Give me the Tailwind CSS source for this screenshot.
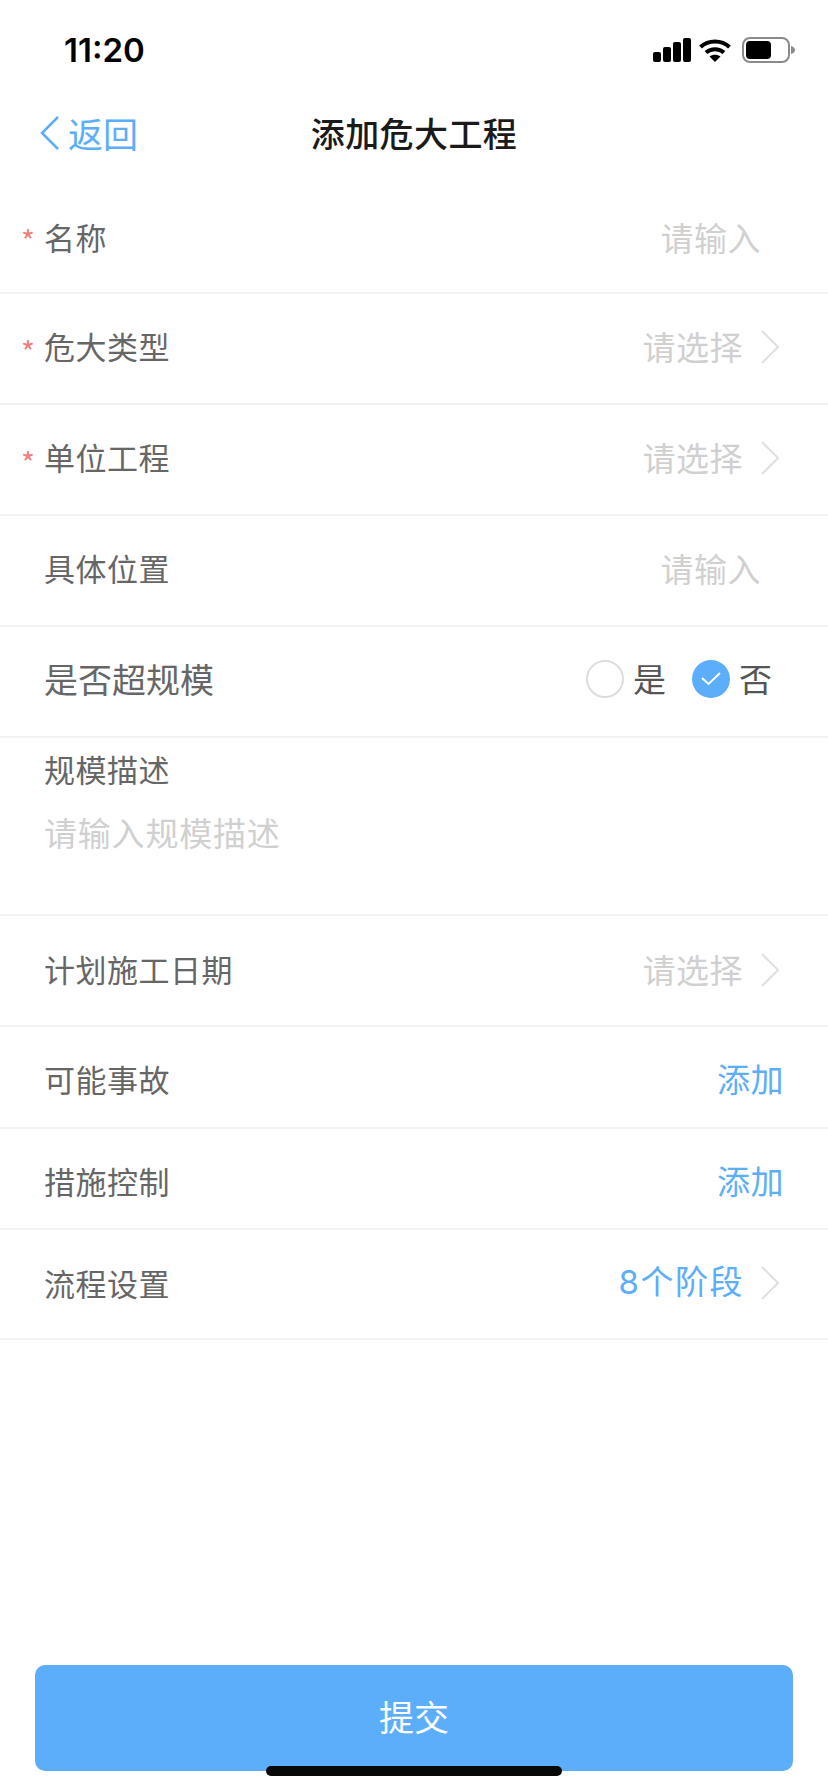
<!DOCTYPE html>
<html lang="zh-CN">
<head>
    <meta charset="UTF-8">
    <meta name="viewport" content="width=device-width, initial-scale=1.0">
    <title>添加危大工程</title>
    <script src="https://cdn.jsdelivr.net/npm/@tailwindcss/browser@4"></script>
</head>
<body class="bg-white font-['Noto_Sans_CJK_SC','Noto_Sans',sans-serif]">
    <div class="relative flex flex-col w-[828px] h-[1792px] overflow-hidden">
        <!-- 状态栏 -->
        <div class="flex items-center justify-between h-[88px] pt-[12px] pl-[64px] pr-[33px] shrink-0">
            <span class="font-['Inter',sans-serif] text-[33px] font-semibold leading-none text-black">11:20</span>
            <div class="flex items-center gap-[8px]">
                <svg width="38" height="24" viewBox="0 0 38 24" fill="#000">
                    <rect x="0" y="14" width="8" height="10" rx="2"/>
                    <rect x="10" y="9" width="8" height="15" rx="2"/>
                    <rect x="20" y="4" width="8" height="20" rx="2"/>
                    <rect x="30" y="0" width="8" height="24" rx="2"/>
                </svg>
                <svg width="32" height="24" viewBox="0 0 32 24" fill="none" stroke="#000" stroke-width="4">
                    <path d="M1.5 9 C9.5 1.5 22.5 1.5 30.5 9"/>
                    <path d="M7 14.5 C12 10 20 10 25 14.5"/>
                    <path d="M16 24 L10.5 18.5 C13.5 16 18.5 16 21.5 18.5 Z" fill="#000" stroke="none"/>
                </svg>
                <svg class="ml-[3px]" width="53" height="26" viewBox="0 0 53 26" fill="none">
                    <rect x="1" y="1" width="46" height="24" rx="7" stroke="#8a8a8a" stroke-width="2"/>
                    <rect x="4" y="4" width="25" height="18" rx="4" fill="#000"/>
                    <path d="M49 9 C52 10 53 11.5 53 13 C53 14.500 52 16 49 17 Z" fill="#8a8a8a"/>
                </svg>
            </div>
        </div>

        <!-- 导航栏 -->
        <div class="relative flex items-center justify-center h-[95px] pb-[5px] shrink-0">
            <div class="absolute left-[40px] top-[27px] flex items-center gap-[8px] text-[#5caefa]">
                <svg width="20" height="34" viewBox="0 0 20 34" fill="none" stroke="#5caefa" stroke-width="2.5">
                    <path d="M18 1 L2 17 L18 33"/>
                </svg>
                <span class="text-[35px] leading-none">返回</span>
            </div>
            <h1 class="text-[34px] tracking-[0.4px] font-medium leading-none text-[#1a1a1a]">添加危大工程</h1>
        </div>

        <!-- 表单 -->
        <div class="flex flex-col">
            <div class="relative flex items-center justify-between h-[111px] pl-[44px] pr-[67px] border-b-2 border-[#f2f2f2]">
                <span class="absolute left-[21px] top-[42px] text-[30px] leading-none text-[#f08080]">*</span>
                <span class="text-[31px] tracking-[0.5px] text-[#666666]">名称</span>
                <span class="text-[33px] tracking-[0.5px] text-[#d0d0d0]">请输入</span>
            </div>
            <div class="relative flex items-center justify-between h-[111px] pb-[4px] pl-[44px] pr-[49px] border-b-2 border-[#f2f2f2]">
                <span class="absolute left-[21px] top-[42px] text-[30px] leading-none text-[#f08080]">*</span>
                <span class="text-[31px] tracking-[0.5px] text-[#666666]">危大类型</span>
                <div class="flex items-center gap-[18px]">
                    <span class="text-[33px] tracking-[0.5px] text-[#d0d0d0]">请选择</span>
                    <svg width="18" height="34" viewBox="0 0 18 34" fill="none" stroke="#e0e0e0" stroke-width="2"><path d="M1 1 L17 17 L1 33"/></svg>
                </div>
            </div>
            <div class="relative flex items-center justify-between h-[111px] pb-[4px] pl-[44px] pr-[49px] border-b-2 border-[#f2f2f2]">
                <span class="absolute left-[21px] top-[42px] text-[30px] leading-none text-[#f08080]">*</span>
                <span class="text-[31px] tracking-[0.5px] text-[#666666]">单位工程</span>
                <div class="flex items-center gap-[18px]">
                    <span class="text-[33px] tracking-[0.5px] text-[#d0d0d0]">请选择</span>
                    <svg width="18" height="34" viewBox="0 0 18 34" fill="none" stroke="#e0e0e0" stroke-width="2"><path d="M1 1 L17 17 L1 33"/></svg>
                </div>
            </div>
            <div class="flex items-center justify-between h-[111px] pb-[4px] pl-[44px] pr-[67px] border-b-2 border-[#f2f2f2]">
                <span class="text-[31px] tracking-[0.5px] text-[#666666]">具体位置</span>
                <span class="text-[33px] tracking-[0.5px] text-[#d0d0d0]">请输入</span>
            </div>
            <div class="flex items-center justify-between h-[111px] pb-[5px] pl-[44px] pr-[56px] border-b-2 border-[#f2f2f2]">
                <span class="mb-[2px] text-[34px] text-[#666666]">是否超规模</span>
                <div class="flex items-center">
                    <span class="w-[38px] h-[38px] rounded-full border-2 border-[#dddddd]"></span>
                    <span class="ml-[9px] text-[33px] text-[#555555]">是</span>
                    <span class="ml-[26px] flex items-center justify-center w-[38px] h-[38px] rounded-full bg-[#5caefa]">
                        <svg width="20" height="14" viewBox="0 0 20 14" fill="none" stroke="#fff" stroke-width="2"><path d="M1 6 L7.500 12 L19 1"/></svg>
                    </span>
                    <span class="ml-[9px] text-[33px] text-[#555555]">否</span>
                </div>
            </div>
            <div class="flex flex-col h-[178px] pl-[44px] pt-[8px] border-b-2 border-[#f2f2f2]">
                <span class="text-[31px] tracking-[0.5px] leading-[46px] text-[#666666]">规模描述</span>
                <span class="mt-[16px] text-[33px] tracking-[0.8px] leading-[48px] text-[#d0d0d0]">请输入规模描述</span>
            </div>
            <div class="flex items-center justify-between h-[111px] pb-[2px] pl-[44px] pr-[49px] border-b-2 border-[#f2f2f2]">
                <span class="text-[31px] tracking-[0.5px] text-[#666666]">计划施工日期</span>
                <div class="flex items-center gap-[18px]">
                    <span class="text-[33px] tracking-[0.5px] text-[#d0d0d0]">请选择</span>
                    <svg width="18" height="34" viewBox="0 0 18 34" fill="none" stroke="#e0e0e0" stroke-width="2"><path d="M1 1 L17 17 L1 33"/></svg>
                </div>
            </div>
            <div class="flex items-center justify-between h-[102px] pt-[4px] pl-[44px] pr-[44px] border-b-2 border-[#f2f2f2]">
                <span class="text-[31px] tracking-[0.5px] text-[#666666]">可能事故</span>
                <span class="text-[33px] tracking-[0.5px] text-[#5caefa]">添加</span>
            </div>
            <div class="flex items-center justify-between h-[101px] pt-[5px] pl-[44px] pr-[44px] border-b-2 border-[#f2f2f2]">
                <span class="text-[31px] tracking-[0.5px] text-[#666666]">措施控制</span>
                <span class="text-[33px] tracking-[0.5px] text-[#5caefa]">添加</span>
            </div>
            <div class="flex items-center justify-between h-[110px] pb-[2px] pl-[44px] pr-[49px] border-b-2 border-[#f2f2f2]">
                <span class="text-[31px] tracking-[0.5px] text-[#666666]">流程设置</span>
                <div class="flex items-center gap-[17px]">
                    <span class="font-['Inter','Noto_Sans_CJK_SC',sans-serif] text-[33px] tracking-[1.5px] text-[#5caefa]">8个阶段</span>
                    <svg width="18" height="34" viewBox="0 0 18 34" fill="none" stroke="#e0e0e0" stroke-width="2"><path d="M1 1 L17 17 L1 33"/></svg>
                </div>
            </div>
        </div>

        <!-- 提交按钮 -->
        <button class="mt-auto mb-[21px] mx-[35px] h-[106px] pb-[4px] rounded-[10px] bg-[#5caefa] text-[35px] text-white">提交</button>

        <div class="absolute left-[266px] top-[1766px] w-[296px] h-[10px] rounded-full bg-[#080808]"></div>
    </div>
</body>
</html>
